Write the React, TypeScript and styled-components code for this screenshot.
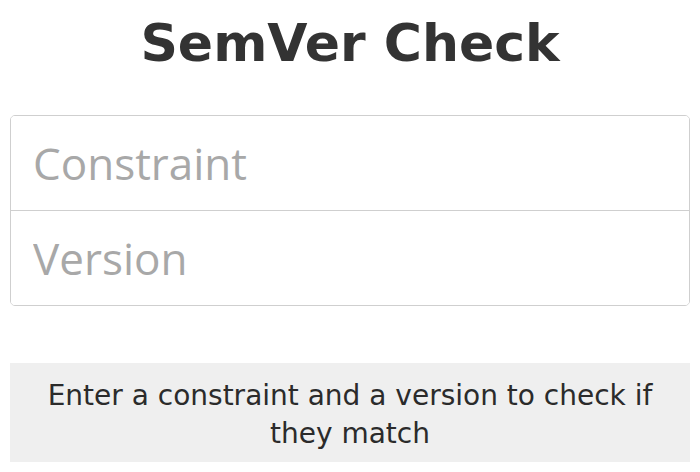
import React from "react";
import styled, { createGlobalStyle } from "styled-components";

const Global = createGlobalStyle`
  html, body { margin: 0; padding: 0; background: #fff; }
  body { font-family: "Open Sans", "Liberation Sans", sans-serif; }
  * { box-sizing: border-box; }
`;

const Page = styled.div`
  width: 700px;
  height: 472px;
  padding: 0 10px;
  display: flex;
  flex-direction: column;
`;

const Title = styled.h1`
  margin: 0;
  height: 115px;
  padding-top: 3px;
  text-align: center;
  font-family: "DejaVu Sans", sans-serif;
  font-weight: 700;
  font-size: 52px;
  line-height: 80px;
  color: #333;
`;

const Group = styled.div`
  border: 1px solid #cfcfcf;
  border-radius: 5px;
  display: flex;
  flex-direction: column;
  overflow: hidden;
`;

const Field = styled.input<{ $last?: boolean }>`
  border: none;
  border-bottom: ${(p) => (p.$last ? "none" : "1px solid #cfcfcf")};
  height: ${(p) => (p.$last ? "94px" : "95px")};
  padding: 0 22px;
  font-family: "Open Sans", sans-serif;
  font-size: 44px;
  color: #333;
  outline: none;
  background: #fff;
  &::placeholder { color: #a8a8a8; }
`;

const Result = styled.div`
  margin-top: 57px;
  height: 99px;
  background: #efefef;
  display: flex;
  align-items: center;
  justify-content: center;
  text-align: center;
  padding: 4px 28px 0;
  font-family: "DejaVu Sans", sans-serif;
  font-size: 28px;
  line-height: 38px;
  color: #2b2b2b;
`;

export default function App() {
  return (
    <Page>
      <Global />
      <Title>SemVer Check</Title>
      <Group>
        <Field placeholder="Constraint" />
        <Field $last placeholder="Version" />
      </Group>
      <Result>Enter a constraint and a version to check if they match</Result>
    </Page>
  );
}
